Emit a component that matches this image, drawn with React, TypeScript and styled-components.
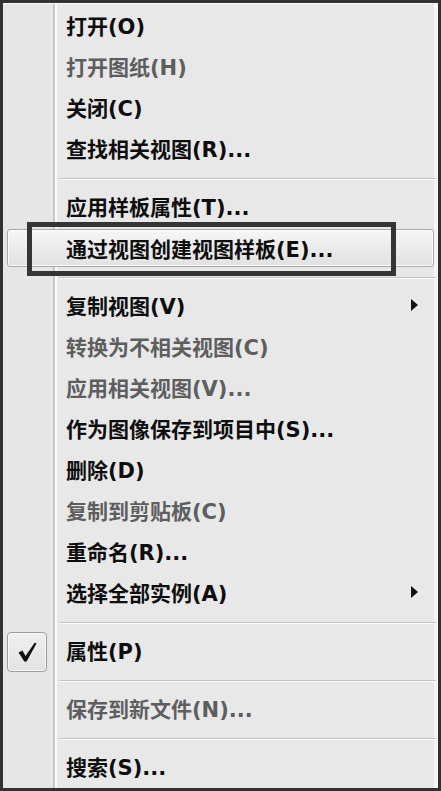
import * as React from "react";
import styled, { createGlobalStyle, css } from "styled-components";

const Global = createGlobalStyle`
  html, body { margin: 0; padding: 0; background: #333; }
  body { font-family: "DejaVu Sans", "Noto Sans CJK SC", sans-serif; }
`;

const Menu = styled.div`
  position: relative;
  box-sizing: border-box;
  width: 441px;
  height: 791px;
  border: 3px solid #323232;
  padding: 3px 0;
  display: flex;
  flex-direction: column;
  background: linear-gradient(
    to right,
    #e6e6e6 0 50px,
    #c6c6c6 50px 52px,
    #fbfbfb 52px 54px,
    #e8e8e8 54px 431px,
    #f6f6f6 431px
  );
  box-shadow: inset 0 1px #fafafa;
`;

const Item = styled.div<{ $disabled?: boolean; $active?: boolean }>`
  position: relative;
  box-sizing: border-box;
  height: 41px;
  flex: none;
  display: flex;
  align-items: center;
  padding-bottom: 3px;
  font-size: 21px;
  font-weight: 700;
  letter-spacing: 0;
  white-space: nowrap;
  color: ${(p) => (p.$disabled ? "#5e5e5e" : "#0e0e0e")};
  ${(p) =>
    p.$active &&
    css`
      height: 38px;
      margin: 1px 4px 2px;
      padding-bottom: 1px;
      border: 1px solid #a9a9a9;
      border-radius: 3px;
      background: linear-gradient(#f6f6f6, #e9e9e9 60%, #e2e2e2);
      box-shadow: inset 0 0 0 1px #fbfbfb;
    `}
`;

const Gutter = styled.span<{ $inset?: boolean }>`
  flex: none;
  width: ${(p) => (p.$inset ? "58px" : "63px")};
  display: flex;
  align-items: center;
  padding-left: 4px;
  box-sizing: border-box;
`;

const CheckBox = styled.span`
  box-sizing: border-box;
  width: 40px;
  height: 40px;
  margin-top: 3px;
  border: 1px solid #9c9c9c;
  border-radius: 4px;
  background: linear-gradient(#efefef, #e3e3e3);
  box-shadow: inset 0 0 0 1px #f8f8f8;
  display: flex;
  align-items: center;
  justify-content: center;
`;

const Arrow = styled.span`
  margin-left: auto;
  margin-right: 20px;
  width: 0;
  height: 0;
  border-left: 7px solid #111;
  border-top: 6px solid transparent;
  border-bottom: 6px solid transparent;
`;

const Separator = styled.div`
  flex: none;
  height: 17px;
  margin: 0 2px 0 56px;
  display: flex;
  align-items: center;
  &::before {
    content: "";
    flex: 1;
    height: 1px;
    background: #c2c2c2;
    box-shadow: 0 1px #fdfdfd;
  }
`;

const Callout = styled.div`
  position: absolute;
  left: 19px;
  top: -8px;
  width: 369px;
  height: 54px;
  box-sizing: border-box;
  border: 5px solid #353535;
  pointer-events: none;
`;

type Entry =
  | { sep: true }
  | {
      sep?: false;
      label: string;
      disabled?: boolean;
      sub?: boolean;
      checked?: boolean;
      active?: boolean;
    };

const entries: Entry[] = [
  { label: "打开(O)" },
  { label: "打开图纸(H)", disabled: true },
  { label: "关闭(C)" },
  { label: "查找相关视图(R)..." },
  { sep: true },
  { label: "应用样板属性(T)..." },
  { label: "通过视图创建视图样板(E)...", active: true },
  { sep: true },
  { label: "复制视图(V)", sub: true },
  { label: "转换为不相关视图(C)", disabled: true },
  { label: "应用相关视图(V)...", disabled: true },
  { label: "作为图像保存到项目中(S)..." },
  { label: "删除(D)" },
  { label: "复制到剪贴板(C)", disabled: true },
  { label: "重命名(R)..." },
  { label: "选择全部实例(A)", sub: true },
  { sep: true },
  { label: "属性(P)", checked: true },
  { sep: true },
  { label: "保存到新文件(N)...", disabled: true },
  { sep: true },
  { label: "搜索(S)..." },
];

function Check() {
  return (
    <svg width="19" height="20" viewBox="0 0 19 20">
      <path d="M0.5 10.5 L4.5 8.5 L7.5 14 L16.8 0.5 L18.5 1.5 L8.6 19.5 L6.3 19.5 Z" fill="#111" />
    </svg>
  );
}

export default function App() {
  return (
    <>
      <Global />
      <Menu>
        {entries.map((e, i) =>
          e.sep ? (
            <Separator key={i} />
          ) : (
            <Item key={i} $disabled={e.disabled} $active={e.active}>
              <Gutter $inset={e.active}>
                {e.checked && (
                  <CheckBox>
                    <Check />
                  </CheckBox>
                )}
              </Gutter>
              {e.label}
              {e.sub && <Arrow />}
              {e.active && <Callout />}
            </Item>
          )
        )}
      </Menu>
    </>
  );
}
